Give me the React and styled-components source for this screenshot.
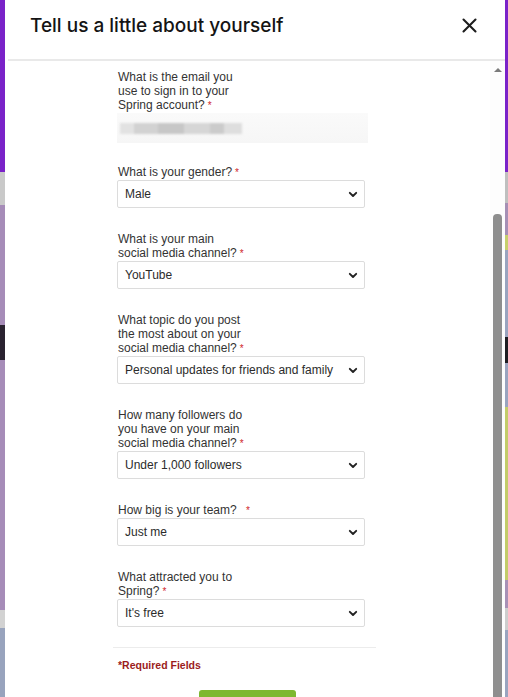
import React from "react";
import styled, { createGlobalStyle } from "styled-components";

const GlobalStyle = createGlobalStyle`
  html, body {
    margin: 0;
    padding: 0;
    overflow: hidden;
    background: #fff;
  }
`;

const Page = styled.div`
  display: flex;
  width: 508px;
  height: 697px;
  overflow: hidden;
`;

const EdgeStrip = styled.div`
  flex: 0 0 ${(p) => p.$w}px;
  background: ${(p) => p.$bg};
`;

const Modal = styled.div`
  flex: 1;
  display: flex;
  flex-direction: column;
  background: #fff;
  min-width: 0;
`;

const ModalHeader = styled.div`
  display: flex;
  align-items: center;
  justify-content: space-between;
  height: 47px;
  padding: 2px 28px 10px 25px;
  border-bottom: 2px solid #e9e9e9;
  margin-left: 3px;
`;

const Title = styled.h1`
  margin: 0 0 0 -3px;
  font-family: "Inter", "Noto Sans", sans-serif;
  font-weight: 500;
  font-size: 19px;
  color: #141414;
`;

const CloseButton = styled.button`
  display: flex;
  padding: 0;
  border: none;
  background: none;
  color: #1d1d1d;
  cursor: pointer;
`;

const Body = styled.div`
  flex: 1;
  display: flex;
  min-height: 0;
`;

const Scroller = styled.div`
  flex: 1;
  overflow: hidden;
`;

const FormColumn = styled.form`
  display: flex;
  flex-direction: column;
  width: 251px;
  margin-left: 112px;
  padding-top: 9px;
  font-family: "Liberation Sans", Arial, sans-serif;
`;

const Field = styled.div`
  display: flex;
  flex-direction: column;
  margin-bottom: ${(p) => p.$gap}px;
`;

const Label = styled.label`
  width: ${(p) => p.$w || 130}px;
  padding-left: 1px;
  font-size: 12px;
  line-height: 14px;
  color: #333;
`;

const Star = styled.span`
  color: #d0262b;
  font-size: 10px;
  margin-left: ${(p) => (p.$wide ? 6 : 3)}px;
`;

const BlurredInput = styled.div`
  height: 30px;
  width: 251px;
  display: flex;
  align-items: center;
  background: linear-gradient(#fafafa, #f6f6f6);
`;

const BlurBar = styled.div`
  width: 122px;
  height: 11px;
  margin-left: 3px;
  filter: blur(1.2px);
  background: linear-gradient(
    90deg,
    #e2e2e2 0 14px,
    #d2d2d2 14px 38px,
    #c7c7c7 38px 64px,
    #d6d6d6 64px 90px,
    #cbcbcb 90px 104px,
    #dedede 104px 122px
  );
`;

const SelectBox = styled.div`
  height: 28px;
  width: 248px;
  box-sizing: border-box;
  display: flex;
  align-items: center;
  justify-content: space-between;
  padding: 0 6px 0 7px;
  border: 1px solid #dcdcdc;
  border-radius: 2px;
  background: #fff;
  font-size: 12px;
  color: #2b2b2b;
`;

const Divider = styled.hr`
  width: 263px;
  margin: 20px 0 0 -4px;
  border: none;
  border-top: 1px solid #ececec;
`;

const Required = styled.div`
  margin-top: 11px;
  padding-left: 1px;
  font-size: 10.5px;
  font-weight: 700;
  color: #9b1c1c;
`;

const SubmitButton = styled.button`
  margin: 19px 0 0 82px;
  width: 97px;
  height: 30px;
  border: none;
  border-radius: 3px 3px 0 0;
  background: #7db830;
`;

const Track = styled.div`
  flex: 0 0 15px;
  display: flex;
  flex-direction: column;
  align-items: center;
  background: #fdfdfd;
`;

const ArrowUp = styled.div`
  margin-top: 7px;
  width: 0;
  height: 0;
  border-left: 4px solid transparent;
  border-right: 4px solid transparent;
  border-bottom: 4px solid #7b7b7b;
`;

const Thumb = styled.div`
  margin-top: 142px;
  flex: 1;
  width: 9px;
  border-radius: 4px 4px 0 0;
  background: #8e8e8e;
`;

const Chevron = () => (
  <svg width="10" height="7" viewBox="0 0 10 7" fill="none">
    <path d="M1.8 1.8 5 5l3.2-3.2" stroke="#222" strokeWidth="1.9" strokeLinecap="round" strokeLinejoin="round" />
  </svg>
);

const fields = [
  { lines: ["What is your gender?"], value: "Male", w: 200 },
  { lines: ["What is your main", "social media channel?"], value: "YouTube" },
  { lines: ["What topic do you post", "the most about on your", "social media channel?"], value: "Personal updates for friends and family" },
  { lines: ["How many followers do", "you have on your main", "social media channel?"], value: "Under 1,000 followers" },
  { lines: ["How big is your team? "], value: "Just me", w: 200, wide: true },
  { lines: ["What attracted you to", "Spring?"], value: "It's free" },
];

const leftEdge = `linear-gradient(#7a22c8 0 172px, #c9c9c9 172px 205px, #a68cb8 205px 325px,
  #2a2230 325px 360px, #a68cb8 360px 610px, #d2d2d2 610px 628px, #98a3bd 628px)`;
const rightEdge = `linear-gradient(#7a22c8 0 172px, #bfbfbf 172px 203px, #a690b5 203px 235px,
  #c6cf6c 235px 250px, #9aa4bf 250px 337px, #1e1e22 337px 363px, #9aa4bf 363px 407px,
  #c3cc6a 407px 580px, #a891b6 580px 608px, #cdcdcd 608px 630px, #9aa4bf 630px)`;

export default function App() {
  return (
    <>
      <GlobalStyle />
      <Page>
        <EdgeStrip $w={5} $bg={leftEdge} />
        <Modal>
          <ModalHeader>
            <Title>Tell us a little about yourself</Title>
            <CloseButton type="button" aria-label="Close">
              <svg width="15" height="15" viewBox="0 0 15 15">
                <path d="M1.5 1.5l12 12M13.5 1.5l-12 12" stroke="currentColor" strokeWidth="2.1" strokeLinecap="round" />
              </svg>
            </CloseButton>
          </ModalHeader>
          <Body>
            <Scroller>
              <FormColumn>
                <Field $gap={22}>
                  <Label>
                    What is the email you
                    <br />
                    use to sign in to your
                    <br />
                    Spring account?<Star>*</Star>
                  </Label>
                  <BlurredInput>
                    <BlurBar />
                  </BlurredInput>
                </Field>
                {fields.map((f, i) => (
                  <Field key={i} $gap={i === fields.length - 1 ? 0 : 24}>
                    <Label $w={f.w}>
                      {f.lines.map((line, j) => (
                        <React.Fragment key={j}>
                          {j > 0 && <br />}
                          {line}
                        </React.Fragment>
                      ))}
                      <Star $wide={f.wide}>*</Star>
                    </Label>
                    <SelectBox>
                      <span>{f.value}</span>
                      <Chevron />
                    </SelectBox>
                  </Field>
                ))}
                <Divider />
                <Required>*Required Fields</Required>
                <SubmitButton type="button" />
              </FormColumn>
            </Scroller>
            <Track>
              <ArrowUp />
              <Thumb />
            </Track>
          </Body>
        </Modal>
        <EdgeStrip $w={3} $bg={rightEdge} />
      </Page>
    </>
  );
}
